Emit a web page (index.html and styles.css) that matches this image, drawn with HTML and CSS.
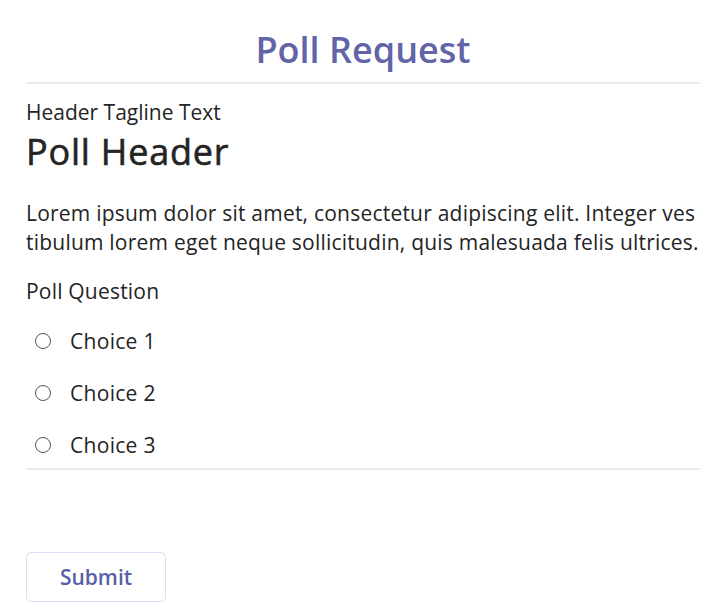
FILE: index.html
```html
<!DOCTYPE html>
<html>
<head>
<meta charset="utf-8">
<link rel="stylesheet" href="styles.css">
</head>
<body>
<div class="card">
  <h1 class="title">Poll Request</h1>
  <div class="rule"></div>
  <div class="tagline">Header Tagline Text</div>
  <h2 class="header">Poll Header</h2>
  <p class="body">Lorem ipsum dolor sit amet, consectetur adipiscing elit. Integer ves<br>tibulum lorem eget neque sollicitudin, quis malesuada felis ultrices.</p>
  <div class="question">Poll Question</div>
  <div class="choices">
    <label class="choice"><span class="radio"></span><span>Choice 1</span></label>
    <label class="choice"><span class="radio"></span><span>Choice 2</span></label>
    <label class="choice"><span class="radio"></span><span>Choice 3</span></label>
  </div>
  <div class="rule rule-bottom"></div>
  <div class="actions">
    <button class="submit">Submit</button>
  </div>
</div>
</body>
</html>
```
FILE: styles.css
```css
html, body {
  margin: 0;
  padding: 0;
  background: #ffffff;
}
body {
  font-family: "Open Sans", "Noto Sans", sans-serif;
  color: #242424;
}
.card {
  width: 674px;
  margin-left: 26px;
  display: flex;
  flex-direction: column;
}
.title {
  margin: 26px 0 0 0;
  font-size: 36px;
  line-height: 48px;
  font-weight: 600;
  color: #6264a7;
  text-align: center;
}
.rule {
  height: 2px;
  background: #ececec;
  margin-top: 8px;
}
.tagline {
  font-size: 21px;
  line-height: 28px;
  margin-top: 14px;
}
.header {
  margin: 4px 0 0 0;
  font-size: 36px;
  line-height: 44px;
  font-weight: 400;
  letter-spacing: 0.8px;
  -webkit-text-stroke: 0.6px #242424;
}
.body {
  margin: 25px 0 0 0;
  font-size: 21px;
  line-height: 29px;
  letter-spacing: 0.22px;
}
.question {
  font-size: 21px;
  line-height: 28px;
  margin-top: 20px;
  letter-spacing: 0.2px;
}
.choices {
  display: flex;
  flex-direction: column;
  gap: 24px;
  margin-top: 22px;
}
.choice {
  display: flex;
  align-items: center;
  gap: 19px;
  font-size: 21px;
  line-height: 28px;
  padding-left: 9px;
  letter-spacing: 0.3px;
}
.radio {
  width: 14px;
  height: 14px;
  border: 1.7px solid #555555;
  border-radius: 50%;
  flex: none;
}
.rule-bottom {
  margin-top: 9px;
}
.actions {
  margin-top: 82px;
}
.submit {
  width: 140px;
  height: 50px;
  background: #ffffff;
  border: 1.5px solid #dcdcf3;
  border-radius: 5px;
  font-family: "Open Sans", "Noto Sans", sans-serif;
  font-size: 21px;
  font-weight: 600;
  color: #5b5fa7;
  padding: 0;
}
```
